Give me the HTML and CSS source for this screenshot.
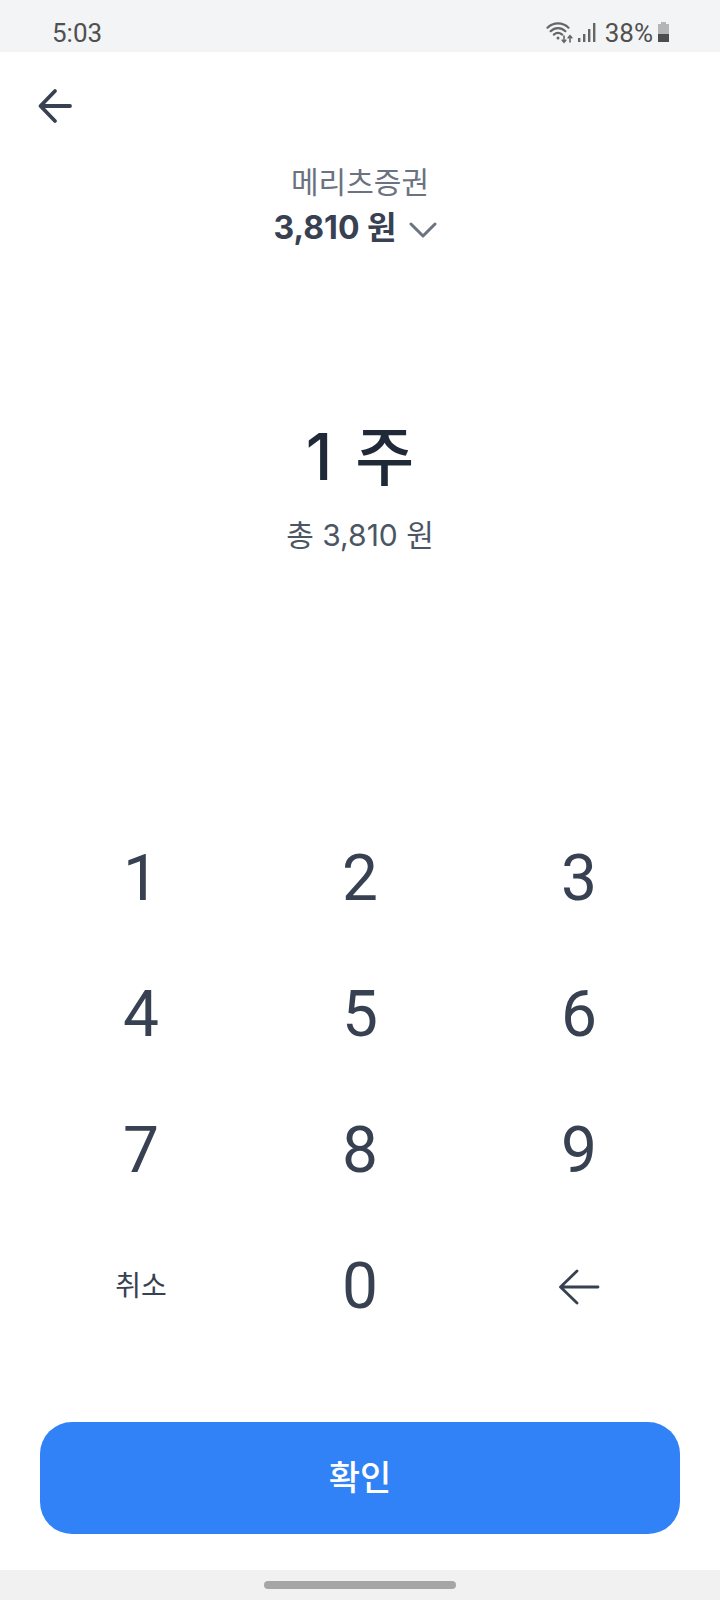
FILE: index.html
```html
<!DOCTYPE html>
<html lang="ko">
<head>
<meta charset="utf-8">
<title>주문</title>
<link rel="stylesheet" href="styles.css">
</head>
<body>
<div class="screen">
  <header class="status">
    <span class="time">5:03</span>
    <div class="status-right">
      <svg class="wifi" width="30" height="24" viewBox="0 0 30 24" fill="none" stroke="#666" stroke-width="2.2" stroke-linecap="round">
        <path d="M1.5 6.7C7.5 .9 16.5 .9 22.5 6.7"/>
        <path d="M4.6 10.2C9 6.1 15 6.1 19.4 10.2"/>
        <path d="M7.8 13.6C10.5 11.3 13.5 11.3 16.2 13.6"/>
        <circle cx="12" cy="17" r="1.5" fill="#666" stroke="none"/>
        <path d="M18 15V21M16.2 19.2L18 21.2L19.8 19.2" stroke-width="1.6"/>
        <path d="M24 21V15M22.2 16.8L24 14.8L25.8 16.8" stroke-width="1.6"/>
      </svg>
      <svg class="signal" width="20" height="22" viewBox="0 0 20 22" fill="#666">
        <rect x="1" y="17" width="2.4" height="4"/>
        <rect x="6" y="13" width="2.4" height="8"/>
        <rect x="11" y="8" width="2.4" height="13"/>
        <rect x="16" y="2" width="2.4" height="19"/>
      </svg>
      <span class="pct">38%</span>
      <svg class="battery" width="13" height="22" viewBox="0 0 13 22">
        <path d="M4 1H9V3H12V21H1V3H4Z" fill="#b5b5b5"/>
        <rect x="1" y="13" width="11" height="8" fill="#4d4d4d"/>
      </svg>
    </div>
  </header>

  <main class="content">
    <div class="topbar">
      <svg class="back" width="36" height="36" viewBox="0 0 36 36" fill="none" stroke="#374151" stroke-width="3.8" stroke-linecap="round" stroke-linejoin="round">
        <path d="M33 18H4M18 3L3.5 18L18 33"/>
      </svg>
    </div>

    <div class="stock">
      <div class="stock-name">메리츠증권</div>
      <div class="stock-price">
        <span>3,810 원</span>
        <svg class="chevron" width="28" height="18" viewBox="0 0 28 18" fill="none" stroke="#6b7280" stroke-width="3" stroke-linecap="round" stroke-linejoin="round">
          <path d="M2 3L14 15L26 3"/>
        </svg>
      </div>
    </div>

    <div class="amount">
      <div class="qty">1 주</div>
      <div class="total">총 3,810 원</div>
    </div>

    <div class="keypad">
      <button class="key">1</button>
      <button class="key">2</button>
      <button class="key">3</button>
      <button class="key">4</button>
      <button class="key">5</button>
      <button class="key">6</button>
      <button class="key">7</button>
      <button class="key">8</button>
      <button class="key">9</button>
      <button class="key key-text">취소</button>
      <button class="key">0</button>
      <button class="key">
        <svg class="del" width="42" height="36" viewBox="0 0 42 36" fill="none" stroke="#374151" stroke-width="2.8" stroke-linecap="round" stroke-linejoin="round">
          <path d="M40 18H3M19 2L2.5 18L19 34"/>
        </svg>
      </button>
    </div>

    <div class="action">
      <button class="confirm">확인</button>
    </div>
  </main>

  <footer class="navbar"><span class="pill"></span></footer>
</div>
</body>
</html>
```

FILE: styles.css
```css
* { box-sizing: border-box; }
html, body { margin: 0; padding: 0; background: #fff; }
body { font-family: Inter, "Noto Sans CJK KR", sans-serif; }
button { font: inherit; border: 0; background: none; padding: 0; }

.screen { width: 720px; height: 1600px; display: flex; flex-direction: column; overflow: hidden; }

.status {
  height: 52px; flex: none; background: #f3f4f6;
  display: flex; justify-content: space-between; align-items: center;
  padding: 14px 50px 0 52px; color: #505050;
  font-family: Roboto, sans-serif;
}
.time { font-size: 26px; }
.status-right { display: flex; align-items: center; }
.signal { margin: 0 0 2px 1px; }
.pct { font-size: 26px; margin-left: 8px; }
.battery { margin: 0 0 2px 4px; }

.content { flex: 1; display: flex; flex-direction: column; }
.topbar { height: 104px; padding: 36px 0 0 37px; flex: none; }
.back { display: block; }

.stock { display: flex; flex-direction: column; align-items: center; margin-top: 4px; }
.stock-name { font-size: 30px; line-height: 44px; color: #6b7280; }
.stock-price { display: flex; align-items: center; gap: 12px; font-size: 32px; line-height: 48px; font-weight: 700; color: #374151; }
.chevron { margin: 3px 10px 0 0; }

.amount { display: flex; flex-direction: column; align-items: center; margin-top: 163px; }
.qty { font-size: 64px; line-height: 84px; font-weight: 500; color: #1f2937; word-spacing: 6px; }
.total { font-size: 30px; line-height: 40px; color: #4b5563; margin-top: 16px; }

.keypad { display: grid; grid-template-columns: repeat(3, 219px); grid-auto-rows: 136px; justify-content: center; margin-top: 255px; }
.key { display: flex; align-items: center; justify-content: center; font-family: Roboto, sans-serif; font-size: 64px; font-weight: 400; color: #374151; }
.key-text { font-family: Inter, "Noto Sans CJK KR", sans-serif; font-size: 28px; padding-bottom: 4px; }
.del { margin-top: 2px; }

.action { padding: 0 40px; margin-top: 68px; }
.confirm { display: block; width: 100%; height: 112px; border-radius: 32px; background: #3182f6; color: #fff; font-size: 34px; font-weight: 500; padding-bottom: 6px; }

.navbar { height: 30px; flex: none; background: #f1f1f1; display: flex; justify-content: center; align-items: center; margin-top: auto; }
.pill { width: 192px; height: 8px; border-radius: 4px; background: #a6a6a6; }
```
